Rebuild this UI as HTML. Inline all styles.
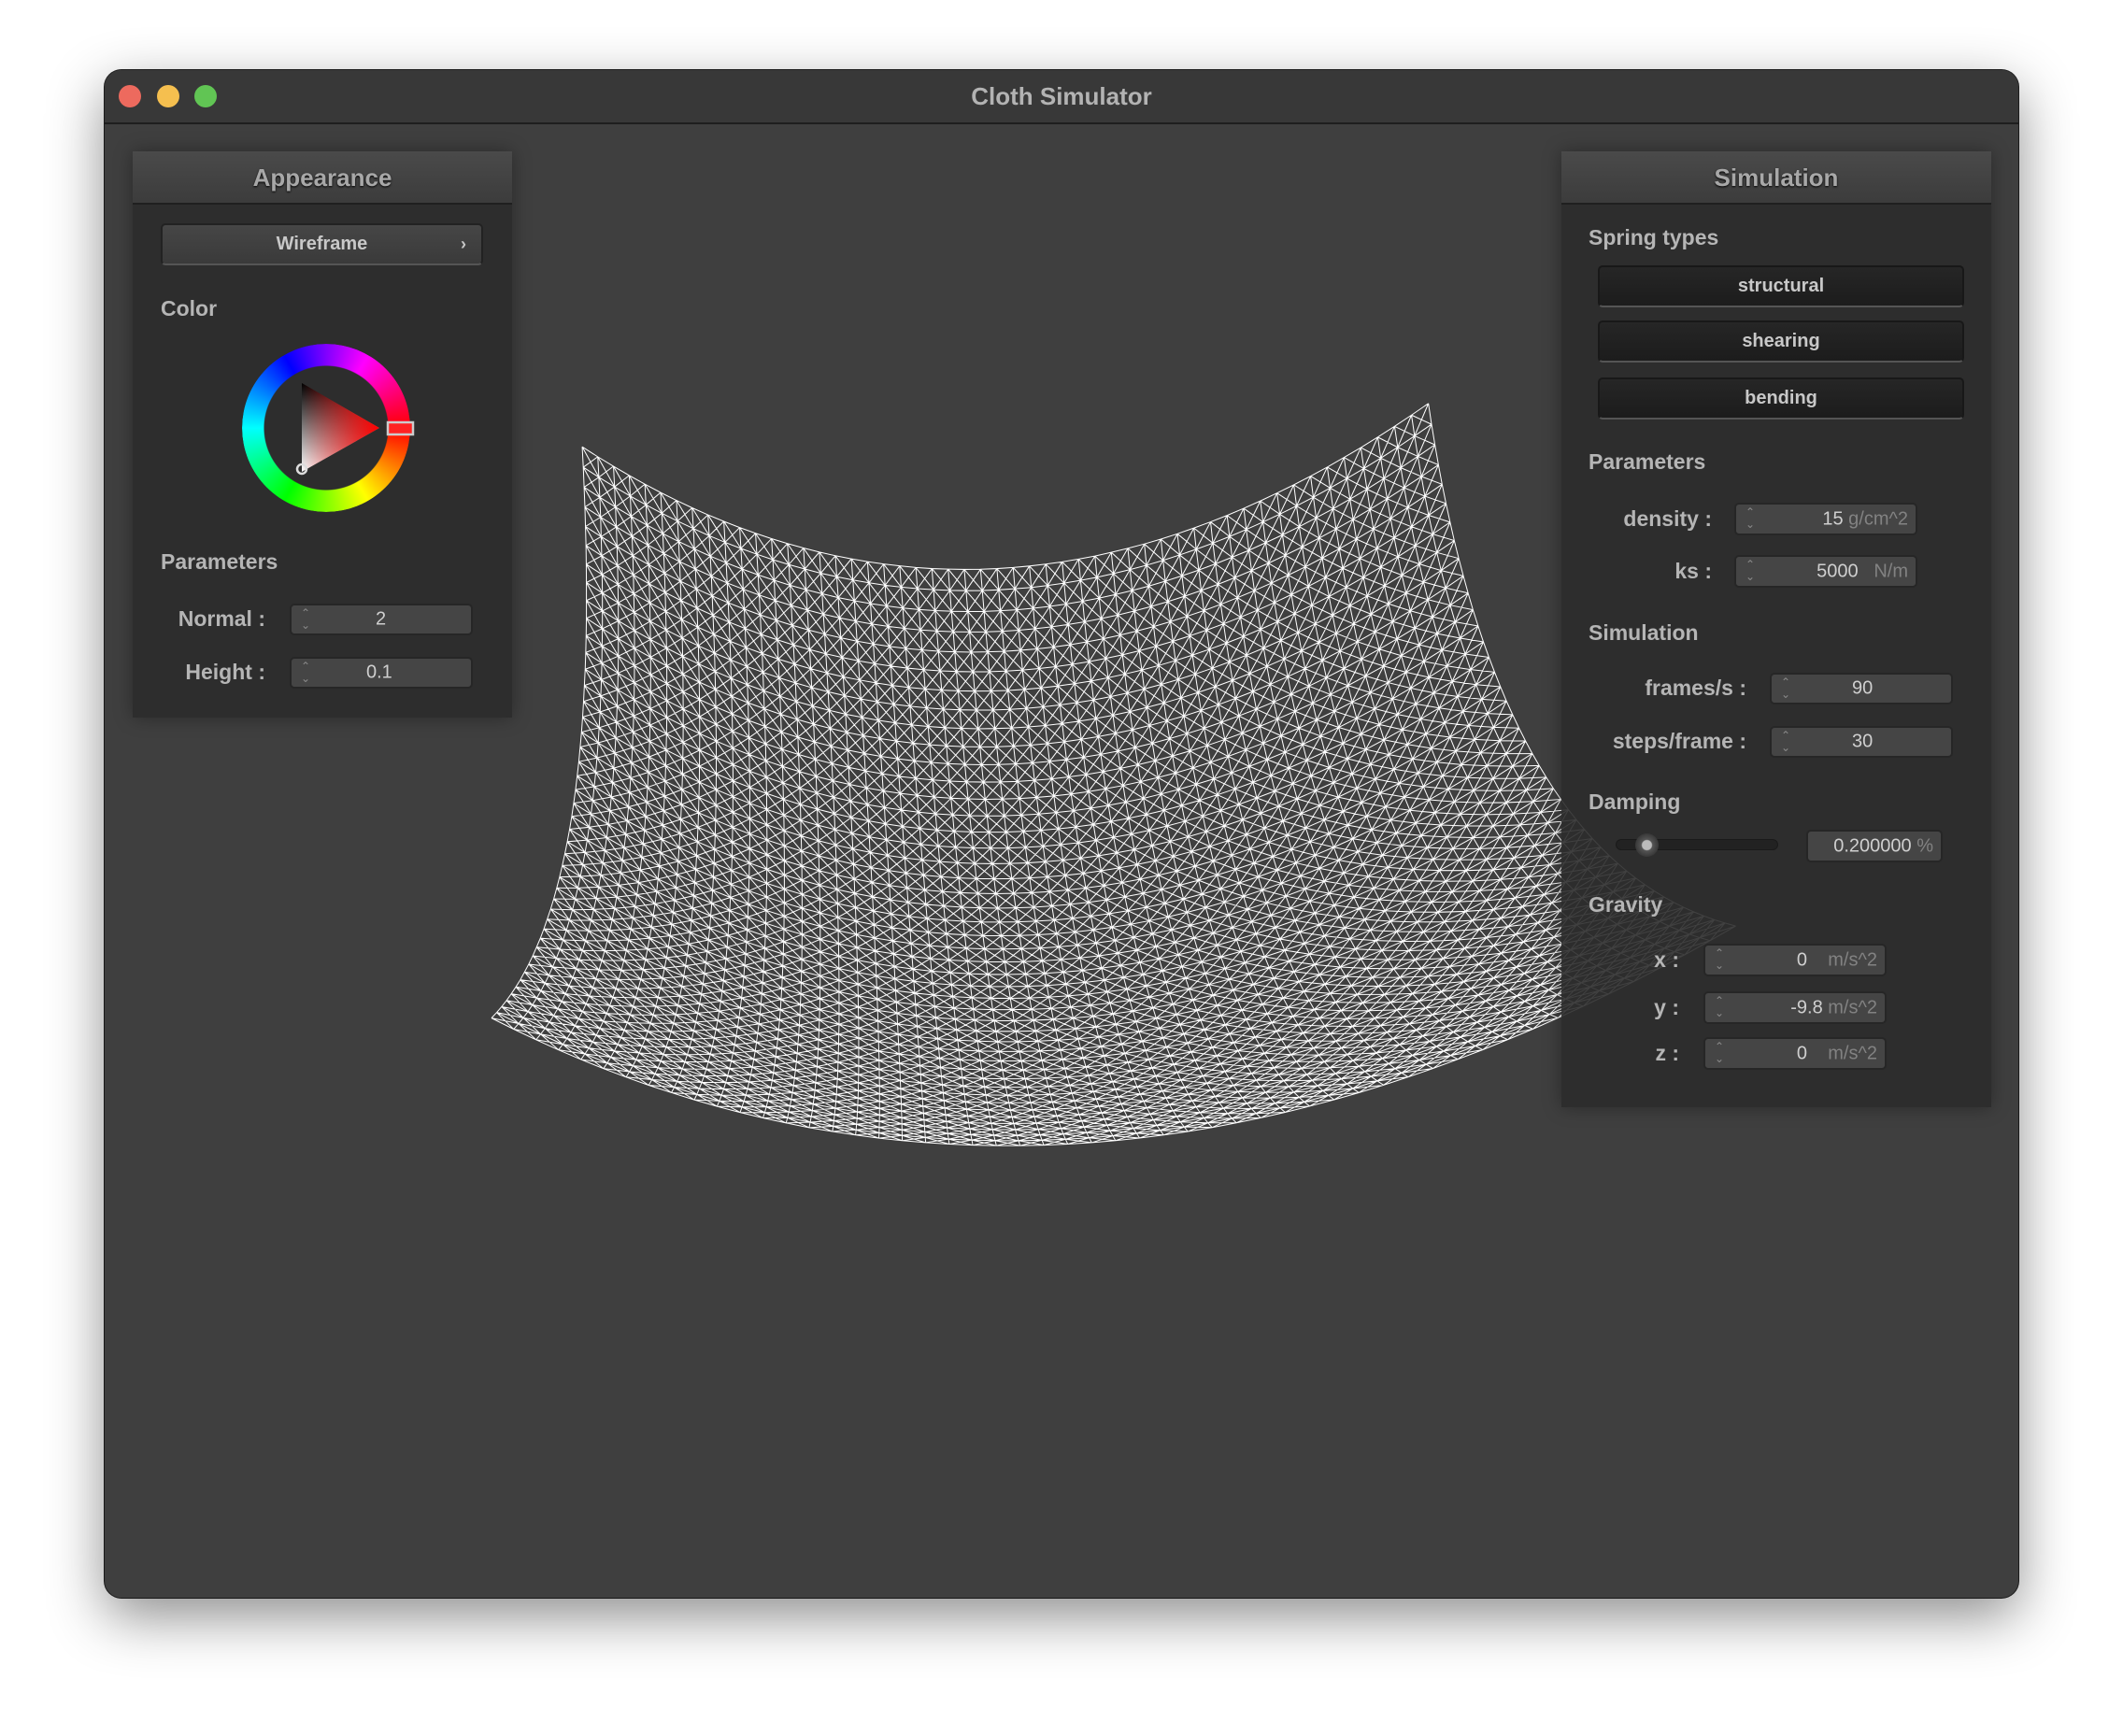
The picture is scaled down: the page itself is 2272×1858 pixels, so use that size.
<!DOCTYPE html>
<html><head><meta charset="utf-8"><style>
*{margin:0;padding:0;box-sizing:border-box}
body{width:2272px;height:1858px;background:#fff;position:relative;overflow:hidden;font-family:"Liberation Sans",sans-serif}
.win{position:absolute;left:112px;top:75px;width:2048px;height:1635px;background:#3f3f3f;border-radius:18px;box-shadow:0 20px 60px rgba(0,0,0,.45),0 0 0 1px #222;overflow:hidden}
.tb{position:absolute;left:0;top:0;width:100%;height:58px;background:#383838;border-bottom:2px solid #1e1e1e}
.tt{position:absolute;left:0;right:0;top:13px;text-align:center;color:#b3b3b3;font-weight:bold;font-size:26px}
.dot{position:absolute;top:16px;width:24px;height:24px;border-radius:50%}
.a{position:absolute}
.panel{position:absolute;background:rgba(43,43,43,.9);box-shadow:0 0 18px rgba(0,0,0,.35)}
.hdr{position:absolute;left:0;top:0;width:100%;height:57px;background:linear-gradient(#4a4a4a,#3c3c3c);border-bottom:2px solid #1f1f1f;color:#a8a8a8;font-weight:bold;font-size:26px;text-align:center;line-height:57px;text-shadow:0 1px 2px #000}
.lbl{position:absolute;color:#b5b5b5;font-weight:bold;font-size:23px;white-space:nowrap}
.rl{text-align:right}
.inp{position:absolute;background:#454545;border:2px solid #262626;border-radius:5px;color:#cfcfcf;font-size:20px}
.inp .sp{position:absolute;left:10px;top:2px;color:#8a8a8a;font-size:12px;line-height:13px}
.inp .v{position:absolute;top:50%;transform:translateY(-50%);white-space:nowrap}
.u{color:#828282}
.btn{position:absolute;background:linear-gradient(#262626,#1c1c1c);border:2px solid #181818;border-bottom-color:#555;border-radius:5px;color:#c8c8c8;font-weight:bold;font-size:20px;text-align:center}
</style></head><body>
<div class="win">
<svg id="mesh" class="a" style="left:-112px;top:-75px" width="2272" height="1858" viewBox="0 0 1568 1282.3"></svg>
<div class="tb"><div class="dot" style="left:15px;background:#ed6a5e"></div><div class="dot" style="left:56px;background:#f5bf4f"></div><div class="dot" style="left:96px;background:#61c554"></div><div class="tt">Cloth Simulator</div></div>

<div class="panel" style="left:30px;top:87px;width:406px;height:606px">
 <div class="hdr">Appearance</div>
 <div class="btn" style="left:30px;top:77px;width:345px;height:45px;background:linear-gradient(#464646,#3a3a3a);border-color:#222;border-bottom-color:#555;line-height:41px">Wireframe<span style="position:absolute;right:16px;font-size:18px">›</span></div>
 <div class="lbl" style="left:30px;top:155px">Color</div>
 <div class="a" style="left:117px;top:206px;width:180px;height:180px;border-radius:50%;background:conic-gradient(from 90deg,#f00,#ff8000,#ff0,#80ff00,#0f0,#00ff80,#0ff,#0080ff,#00f,#8000ff,#f0f,#ff0080,#f00);-webkit-mask:radial-gradient(circle,transparent 66px,#000 67px);mask:radial-gradient(circle,transparent 66px,#000 67px)"></div>
 <svg class="a" style="left:117px;top:206px" width="190" height="180">
  <defs><linearGradient id="g1" x1="0" y1="0" x2="0" y2="1"><stop offset="0" stop-color="#000"/><stop offset="1" stop-color="#fff"/></linearGradient>
  <linearGradient id="g2" x1="0" y1="0" x2="1" y2="0"><stop offset="0" stop-color="#f00" stop-opacity="0"/><stop offset="1" stop-color="#f00"/></linearGradient></defs>
  <polygon points="64,42 147,90 64,137" fill="url(#g1)"/>
  <polygon points="64,42 147,90 64,137" fill="url(#g2)"/>
  <circle cx="64" cy="134" r="5" fill="none" stroke="#ddd" stroke-width="2.5"/>
  <rect x="156" y="84" width="27" height="13" fill="#f22" stroke="#ccc" stroke-width="2.5"/>
 </svg>
 <div class="lbl" style="left:30px;top:426px">Parameters</div>
 <div class="lbl rl" style="left:0;width:142px;top:487px">Normal :</div>
 <div class="inp" style="left:168px;top:484px;width:196px;height:34px"><div class="sp">⌃<br>⌄</div><div class="v" style="left:90px">2</div></div>
 <div class="lbl rl" style="left:0;width:142px;top:544px">Height :</div>
 <div class="inp" style="left:168px;top:541px;width:196px;height:34px"><div class="sp">⌃<br>⌄</div><div class="v" style="left:80px">0.1</div></div>
</div>

<div class="panel" style="left:1559px;top:87px;width:460px;height:1023px">
 <div class="hdr">Simulation</div>
 <div class="lbl" style="left:29px;top:79px">Spring types</div>
 <div class="btn" style="left:39px;top:122px;width:392px;height:45px;line-height:41px">structural</div>
 <div class="btn" style="left:39px;top:181px;width:392px;height:45px;line-height:41px">shearing</div>
 <div class="btn" style="left:39px;top:242px;width:392px;height:45px;line-height:41px">bending</div>
 <div class="lbl" style="left:29px;top:319px">Parameters</div>
 <div class="lbl rl" style="left:0;width:161px;top:380px">density :</div>
 <div class="inp" style="left:185px;top:376px;width:196px;height:35px"><div class="sp">⌃<br>⌄</div><div class="v" style="right:8px">15 <span class="u">g/cm^2</span></div></div>
 <div class="lbl rl" style="left:0;width:161px;top:436px">ks :</div>
 <div class="inp" style="left:185px;top:432px;width:196px;height:35px"><div class="sp">⌃<br>⌄</div><div class="v" style="right:8px">5000 &nbsp;&nbsp;<span class="u">N/m</span></div></div>
 <div class="lbl" style="left:29px;top:502px">Simulation</div>
 <div class="lbl rl" style="left:0;width:198px;top:561px">frames/s :</div>
 <div class="inp" style="left:223px;top:558px;width:196px;height:34px"><div class="sp">⌃<br>⌄</div><div class="v" style="left:86px">90</div></div>
 <div class="lbl rl" style="left:0;width:198px;top:618px">steps/frame :</div>
 <div class="inp" style="left:223px;top:615px;width:196px;height:34px"><div class="sp">⌃<br>⌄</div><div class="v" style="left:86px">30</div></div>
 <div class="lbl" style="left:29px;top:683px">Damping</div>
 <div class="a" style="left:58px;top:736px;width:174px;height:12px;background:#222;border-radius:6px;border:1px solid #1a1a1a"></div>
 <div class="a" style="left:79px;top:730px;width:25px;height:25px;border-radius:50%;background:radial-gradient(circle,#bbb 0 5px,#555 6px,#3a3a3a 12px)"></div>
 <div class="inp" style="left:262px;top:726px;width:146px;height:35px"><div class="v" style="right:8px">0.200000 <span class="u">%</span></div></div>
 <div class="lbl" style="left:29px;top:793px">Gravity</div>
 <div class="lbl rl" style="left:0;width:126px;top:852px">x :</div>
 <div class="inp" style="left:152px;top:848px;width:196px;height:35px"><div class="sp">⌃<br>⌄</div><div class="v" style="right:8px">0 &nbsp;&nbsp;&nbsp;<span class="u">m/s^2</span></div></div>
 <div class="lbl rl" style="left:0;width:126px;top:903px">y :</div>
 <div class="inp" style="left:152px;top:899px;width:196px;height:35px"><div class="sp">⌃<br>⌄</div><div class="v" style="right:8px">-9.8 <span class="u">m/s^2</span></div></div>
 <div class="lbl rl" style="left:0;width:126px;top:952px">z :</div>
 <div class="inp" style="left:152px;top:948px;width:196px;height:35px"><div class="sp">⌃<br>⌄</div><div class="v" style="right:8px">0 &nbsp;&nbsp;&nbsp;<span class="u">m/s^2</span></div></div>
</div>
</div>
<script>
(function(){
function q(a,c,b,t){var s=1-t;return [s*s*a[0]+2*s*t*c[0]+t*t*b[0], s*s*a[1]+2*s*t*c[1]+t*t*b[1]];}
var P00=[430,330],P10=[1055,298],P01=[363,752],P11=[1282,684];
var Ct=[730,526],Cb=[790,970],Cl=[448,665],Cr=[1105,640];
function pt(u,v){
 var T=q(P00,Ct,P10,u),B=q(P01,Cb,P11,u),L=q(P00,Cl,P01,v),R=q(P10,Cr,P11,v);
 var x=(1-v)*T[0]+v*B[0]+(1-u)*L[0]+u*R[0]-((1-u)*(1-v)*P00[0]+u*(1-v)*P10[0]+(1-u)*v*P01[0]+u*v*P11[0]);
 var y=(1-v)*T[1]+v*B[1]+(1-u)*L[1]+u*R[1]-((1-u)*(1-v)*P00[1]+u*(1-v)*P10[1]+(1-u)*v*P01[1]+u*v*P11[1]);
 return x.toFixed(1)+','+y.toFixed(1);}
var N=52,M=44,d='',i,j;
for(j=0;j<=M;j++){d+='M'+pt(0,j/M);for(i=1;i<=N;i++)d+='L'+pt(i/N,j/M);}
for(i=0;i<=N;i++){d+='M'+pt(i/N,0);for(j=1;j<=M;j++)d+='L'+pt(i/N,j/M);}
for(j=0;j<M;j++)for(i=0;i<N;i++){d+='M'+pt(i/N,j/M)+'L'+pt((i+1)/N,(j+1)/M)+'M'+pt((i+1)/N,j/M)+'L'+pt(i/N,(j+1)/M);}
document.getElementById('mesh').innerHTML='<path d="'+d+'" fill="none" stroke="#fff" stroke-width="0.7"/>';
})();
</script>
</body></html>
